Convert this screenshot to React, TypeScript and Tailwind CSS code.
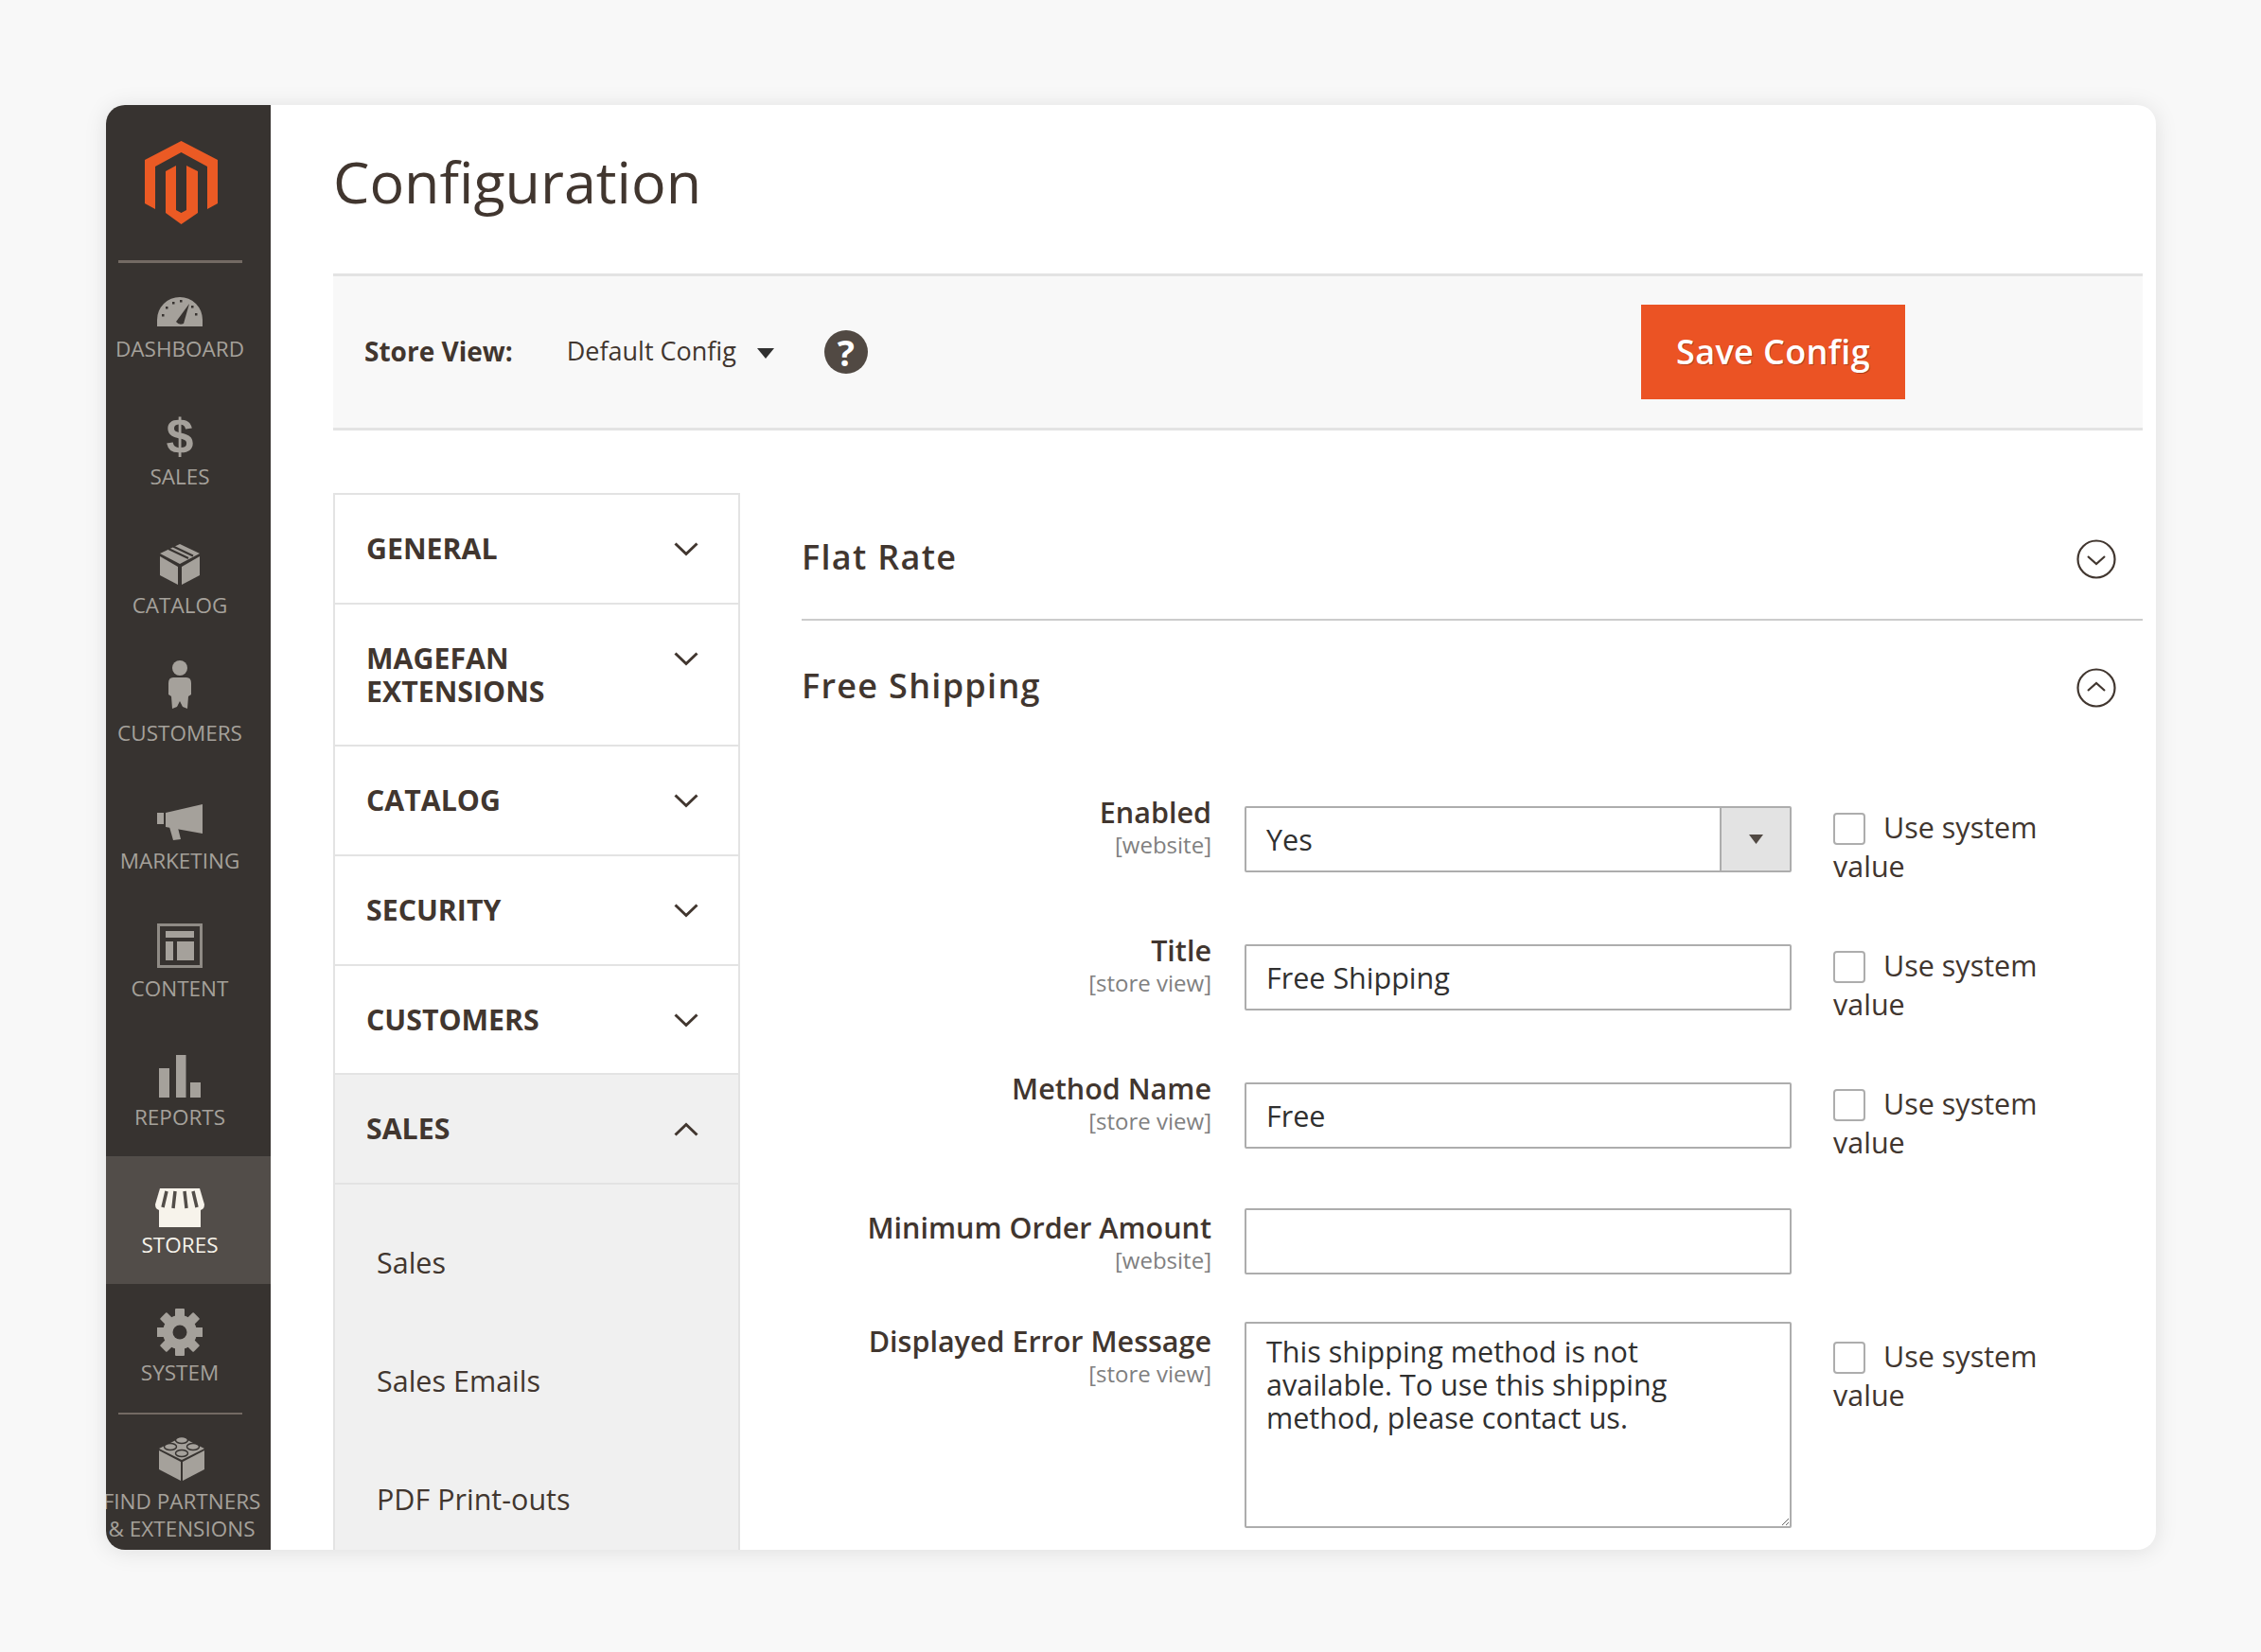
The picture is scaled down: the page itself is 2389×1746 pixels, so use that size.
import React from 'react';

const FONT = "font-['Open_Sans',sans-serif]";

const Logo = () => (
  <svg width="77" height="88" viewBox="0 0 77 88" fill="#eb5a24">
    <path d="M38.5 0 L77 20 V66 L66 72 V27 L38.5 12 L11 27 V72 L0 66 V20 Z" />
    <path d="M22 32 L33 26 V73 L38.5 76 L44 73 V26 L56 32 V76 L38.5 88 L22 76 Z" />
  </svg>
);

const DashboardIcon = () => (
  <svg width="48" height="32" viewBox="0 0 48 32">
    <path d="M0 32 V25 A24 24 0 0 1 48 25 V32 Z" fill="currentColor" />
    <g fill="#373330">
      <rect x="5" y="19" width="2.5" height="2.5" />
      <rect x="9" y="11" width="2.5" height="2.5" />
      <rect x="16" y="6" width="2.5" height="2.5" />
      <rect x="24" y="4" width="2.5" height="2.5" />
      <rect x="36" y="10" width="2.5" height="2.5" />
      <rect x="40" y="18" width="2.5" height="2.5" />
      <path d="M20 27 L34 8 L28 29 Q23 31 20 27 Z" />
    </g>
  </svg>
);

const CatalogIcon = () => (
  <svg width="42" height="43" viewBox="0 0 42 43" fill="currentColor">
    <path d="M21 0 L42 10 L21 21 L0 10 Z" />
    <path d="M0 13 L19 24 V43 L0 33 Z" />
    <path d="M42 13 L23 24 V43 L42 33 Z" />
    <path d="M9 5 L30 15 M14 2.5 L35 12.5" stroke="#373330" strokeWidth="2" />
  </svg>
);

const CustomersIcon = () => (
  <svg width="24" height="52" viewBox="0 0 24 52" fill="currentColor">
    <circle cx="12" cy="8" r="8" />
    <path d="M5 18 H19 Q24 18 24 24 V36 L21 38 L20 51 L15 49 L12 43 L9 49 L4 51 L3 38 L0 36 V24 Q0 18 5 18 Z" />
  </svg>
);

const MarketingIcon = () => (
  <svg width="48" height="38" viewBox="0 0 48 38" fill="currentColor">
    <rect x="0" y="9" width="7" height="12" />
    <path d="M9 9 L48 0 V31 L9 24 Z" />
    <path d="M13 24 L22 25 L25 37 L17 38 Z" />
  </svg>
);

const ContentIcon = () => (
  <svg width="48" height="47" viewBox="0 0 48 47" fill="currentColor">
    <rect x="1.5" y="1.5" width="45" height="44" fill="none" stroke="#8f8b85" strokeWidth="3" />
    <rect x="9" y="8" width="30" height="7" />
    <rect x="9" y="19" width="8" height="20" />
    <rect x="21" y="19" width="18" height="20" />
  </svg>
);

const ReportsIcon = () => (
  <svg width="44" height="45" viewBox="0 0 44 45" fill="currentColor">
    <rect x="0" y="14" width="11" height="31" />
    <rect x="18" y="0" width="10.5" height="45" />
    <rect x="33" y="29" width="11" height="16" />
  </svg>
);

const StoresIcon = () => (
  <svg width="52" height="41" viewBox="0 0 52 41" fill="currentColor">
    <path d="M5 0 H47 L52 17 Q52 23 46 23 H6 Q0 23 0 17 Z" />
    <rect x="4" y="22" width="44" height="19" />
    <path d="M12 3 L8 20 M21 3 L19 21 M31 3 L33 21 M40 3 L44 20" stroke="#524d49" strokeWidth="3.5" />
  </svg>
);

const SystemIcon = () => (
  <svg width="48" height="50" viewBox="0 0 48 50" fill="currentColor">
    <circle cx="24" cy="25" r="18" />
    {[0, 45, 90, 135, 180, 225, 270, 315].map((a) => (
      <rect key={a} x="19" y="0" width="10" height="12" rx="1" transform={`rotate(${a} 24 25)`} />
    ))}
    <circle cx="24" cy="25" r="7.5" fill="#373330" />
  </svg>
);

const FindIcon = () => (
  <svg width="48" height="49" viewBox="0 0 48 49" fill="currentColor">
    <path d="M24 3 L48 15 L24 27 L0 15 Z" />
    <path d="M0 17 L23 29 V49 L0 37 Z" />
    <path d="M48 17 L25 29 V49 L48 37 Z" />
    <g stroke="#373330" strokeWidth="1.5">
      <ellipse cx="24" cy="6" rx="6.5" ry="3.5" />
      <ellipse cx="12" cy="13" rx="6.5" ry="3.5" />
      <ellipse cx="36" cy="13" rx="6.5" ry="3.5" />
      <ellipse cx="24" cy="20" rx="6.5" ry="3.5" />
    </g>
  </svg>
);

const Chevron = ({ up }: { up?: boolean }) => (
  <svg width="26" height="15" viewBox="0 0 26 15" fill="none" stroke="#41362f" strokeWidth="3">
    <path d={up ? 'M1.5 13.5 L13 2.5 L24.5 13.5' : 'M1.5 1.5 L13 12.5 L24.5 1.5'} />
  </svg>
);

const CircleToggle = ({ up, className }: { up?: boolean; className?: string }) => (
  <svg className={className} width="42" height="42" viewBox="0 0 42 42" fill="none" stroke="#41362f" strokeWidth="2.2">
    <circle cx="21" cy="21" r="19.5" />
    <path d={up ? 'M12 24 L21 16 L30 24' : 'M12 18 L21 26 L30 18'} />
  </svg>
);

// lift nudges the icon up inside its slot, the source icons aren't all centred the same
const navItems = [
  { label: 'DASHBOARD', icon: <DashboardIcon />, lift: '' },
  {
    label: 'SALES',
    icon: <span className="font-['Liberation_Sans',sans-serif] font-bold text-[52px] leading-none">$</span>,
    lift: 'mb-[6px]',
  },
  { label: 'CATALOG', icon: <CatalogIcon />, lift: 'mb-[6px]' },
  { label: 'CUSTOMERS', icon: <CustomersIcon />, lift: 'mb-[22px]' },
  { label: 'MARKETING', icon: <MarketingIcon />, lift: 'mb-[2px]' },
  { label: 'CONTENT', icon: <ContentIcon />, lift: 'mb-[12px]' },
  { label: 'REPORTS', icon: <ReportsIcon />, lift: 'mb-[6px]' },
  { label: 'STORES', icon: <StoresIcon />, lift: '', active: true },
  { label: 'SYSTEM', icon: <SystemIcon />, lift: 'mb-[6px]' },
];

const Sidebar = () => (
  <aside className="w-[174px] shrink-0 bg-[#373330] flex flex-col overflow-hidden">
    <div className="h-[164px] shrink-0 pl-[41px] pt-[38px]">
      <Logo />
    </div>
    <div className="h-[3px] w-[131px] ml-[13px] bg-[#736a63] -mb-[3px] shrink-0" />
    {navItems.map((item) => (
      <div
        key={item.label}
        className={`h-[135.3px] shrink-0 pr-[18px] pt-[26px] flex flex-col items-center ${
          item.active ? 'bg-[#524d49] text-[#f7f3eb]' : 'text-[#a5a19b]'
        }`}
      >
        <div className="h-[56px] flex items-center justify-center">
          <div className={`flex ${item.lift}`}>{item.icon}</div>
        </div>
        <div className="text-[22.5px] leading-[24px]">{item.label}</div>
      </div>
    ))}
    <div className="h-[2px] w-[131px] ml-[13px] bg-[#736a63] shrink-0" />
    <div className="pt-[21px] text-[#a5a19b] flex flex-col items-center pr-[14px]">
      <FindIcon />
      <div className="mt-[7px] text-[22.5px] leading-[29px] whitespace-nowrap text-center">
        FIND PARTNERS
        <br />& EXTENSIONS
      </div>
    </div>
  </aside>
);

const tabs = [
  { label: ['GENERAL'] },
  { label: ['MAGEFAN', 'EXTENSIONS'] },
  { label: ['CATALOG'] },
  { label: ['SECURITY'] },
  { label: ['CUSTOMERS'] },
];

const TabRow = ({ label, up }: { label: string[]; up?: boolean }) => (
  <div
    className={`flex justify-between pl-[33px] pr-[42px] pt-[39px] pb-[39.7px] border-b-2 border-[#e3e3e3] ${
      up ? 'bg-[#f0f0f0]' : ''
    }`}
  >
    <div className="font-bold text-[30.3px] leading-[35px] text-[#41362f]">
      {label.map((l) => (
        <div key={l}>{l}</div>
      ))}
    </div>
    <div className="pt-[11px]">
      <Chevron up={up} />
    </div>
  </div>
);

const TabsColumn = () => (
  <div className="w-[430px] shrink-0 border-x-2 border-t-2 border-[#e3e3e3] flex flex-col">
    {tabs.map((t) => (
      <TabRow key={t.label[0]} label={t.label} />
    ))}
    <TabRow label={['SALES']} up />
    <div className="flex-1 bg-[#f0f0f0] pl-[44px] pt-[65px] flex flex-col gap-[90px] text-[30.5px] leading-[35px] text-[#41362f]">
      <div>Sales</div>
      <div>Sales Emails</div>
      <div>PDF Print-outs</div>
    </div>
  </div>
);

const UseSystem = ({ low }: { low?: boolean }) => (
  <div className={`ml-[44px] w-[230px] text-[30.5px] leading-[41px] text-[#41362f] ${low ? 'mt-[16px]' : 'mt-[2px]'}`}>
    <input
      type="checkbox"
      readOnly
      className="appearance-none inline-block w-[34px] h-[34px] mr-[19px] align-[-7px] rounded-[4px] border-2 border-[#adadad] bg-white"
    />
    Use system value
  </div>
);

const FieldLabel = ({ label, scope, low }: { label: string; scope: string; low?: boolean }) => (
  <div className={`w-[433px] mr-[35px] shrink-0 text-right ${low ? 'mt-[3px]' : '-mt-[11px]'}`}>
    <div className="font-semibold text-[30.5px] leading-[35px] text-[#41362f]">{label}</div>
    <div className="text-[24px] leading-[33px] text-[#808080]">{scope}</div>
  </div>
);

const inputCls =
  "w-[578px] h-[70px] shrink-0 border-2 border-[#adadad] rounded-[2px] pl-[21px] text-[30.5px] text-[#303030] bg-white outline-none font-['Open_Sans',sans-serif]";

const FreeShippingForm = () => (
  <div className="pt-[55px] flex flex-col">
    <div className="flex h-[146px]">
      <FieldLabel label="Enabled" scope="[website]" />
      <div className="w-[578px] h-[70px] shrink-0 border-2 border-[#adadad] rounded-[2px] flex items-stretch text-[30.5px] text-[#303030]">
        <div className="flex-1 pl-[21px] leading-[66px]">Yes</div>
        <div className="w-[74px] bg-[#e3e3e3] border-l-2 border-[#adadad] flex items-center justify-center">
          <svg width="15" height="10" viewBox="0 0 15 10" fill="#514943">
            <path d="M0 0 H15 L7.5 10 Z" />
          </svg>
        </div>
      </div>
      <UseSystem />
    </div>
    <div className="flex h-[146px]">
      <FieldLabel label="Title" scope="[store view]" />
      <input className={inputCls} defaultValue="Free Shipping" />
      <UseSystem />
    </div>
    <div className="flex h-[133px]">
      <FieldLabel label="Method Name" scope="[store view]" />
      <input className={inputCls} defaultValue="Free" />
      <UseSystem />
    </div>
    <div className="flex h-[120px]">
      <FieldLabel label="Minimum Order Amount" scope="[website]" low />
      <input className={inputCls} />
    </div>
    <div className="flex">
      <FieldLabel label="Displayed Error Message" scope="[store view]" low />
      <textarea
        className="w-[578px] h-[218px] shrink-0 border-2 border-[#adadad] rounded-[2px] pl-[21px] pr-[102px] pt-[12px] text-[30.5px] leading-[35px] text-[#303030] bg-white outline-none font-['Open_Sans',sans-serif]"
        defaultValue="This shipping method is not available. To use this shipping method, please contact us."
      />
      <UseSystem low />
    </div>
  </div>
);

export default function App() {
  return (
    <div className={`w-[2389px] h-[1746px] bg-[#f8f8f8] pt-[111px] pl-[112px] overflow-hidden ${FONT}`}>
      <div className="w-[2166px] h-[1527px] bg-white rounded-[20px] overflow-hidden flex shadow-[0_2px_24px_rgba(0,0,0,0.1)]">
        <Sidebar />
        <main className="flex-1 pl-[66px] pr-[14px] flex flex-col min-w-0">
          <div className="h-[178px] shrink-0 pt-[39px]">
            <h1 className="text-[61px] leading-[84px] font-normal text-[#41362f]">Configuration</h1>
          </div>

          <div className="h-[166px] shrink-0 bg-[#f8f8f8] border-y-[3px] border-[#e3e3e3] flex items-center pl-[33px] pr-[251px]">
            <span className="font-bold text-[28px] text-[#41362f] mb-[3px]">Store View:</span>
            <span className="ml-[57px] text-[27px] text-[#41362f] mb-[1px]">Default Config</span>
            <svg className="ml-[22px] mt-[2px]" width="18" height="11" viewBox="0 0 18 11" fill="#303030">
              <path d="M0 0 H18 L9 11 Z" />
            </svg>
            <span className="ml-[53px] w-[46px] h-[46px] rounded-full bg-[#514943] text-white font-bold text-[38px] leading-none flex items-center justify-center">
              ?
            </span>
            <button className="ml-auto w-[279px] h-[100px] bg-[#eb5324] text-white font-semibold text-[36px] tracking-[0.4px] [text-shadow:1px_1px_0_rgba(0,0,0,0.25)]">
              Save Config
            </button>
          </div>

          <div className="flex-1 mt-[66px] flex min-h-0">
            <TabsColumn />
            <div className="flex-1 ml-[65px] min-w-0">
              <div className="h-[135px] border-b-2 border-[#cccccc] flex items-center justify-between pr-[28px]">
                <h2 className="font-semibold text-[36px] tracking-[1.3px] text-[#41362f] mt-[2px]">Flat Rate</h2>
                <CircleToggle className="mt-[7px]" />
              </div>
              <div className="h-[141px] flex items-center justify-between pr-[28px]">
                <h2 className="font-semibold text-[36px] tracking-[1.3px] text-[#41362f] mb-[4px]">Free Shipping</h2>
                <CircleToggle up />
              </div>
              <FreeShippingForm />
            </div>
          </div>
        </main>
      </div>
    </div>
  );
}
